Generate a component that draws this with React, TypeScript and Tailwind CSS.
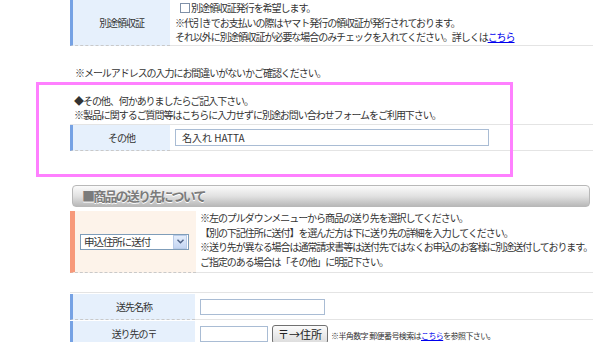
const Label = ({ w, children, color, bg, h }: { w: string; children?: React.ReactNode; color: string; bg: string; h: string }) => (
  <div className={`${w} ${h} ${bg} ${color} shrink-0 flex items-center justify-center border-l-[3px] border-b border-b-[#c9c9c9] [border-bottom-style:dashed]`}>
    {children}
  </div>
);

export default function App() {
  return (
    <div className="relative w-[600px] h-[342px] overflow-hidden bg-white font-['Noto_Sans_CJK_JP','Noto_Sans',sans-serif] text-[10px] tracking-[-1.05px] text-[#333]">
      <div className="ml-[70px] w-[523px]">
        {/* 別途領収証 */}
        <div className="flex h-[46px]">
          <Label w="w-[100px]" h="h-[46px]" bg="bg-[#e6f0fc]" color="border-l-[#76a2e4]">別途領収証</Label>
          <div className="flex-1 pl-[5px] border-b border-[#e4e4e4] leading-[14.5px]">
            <div className="flex items-center pt-[1px]">
              <span className="ml-[5px] mr-[1px] w-[10px] h-[10px] border border-[#7f90a8] bg-white"></span>
              別途領収証発行を希望します。
            </div>
            <div>※代引きでお支払いの際はヤマト発行の領収証が発行されております。</div>
            <div>
              それ以外に別途領収証が必要な場合のみチェックを入れてください。詳しくは
              <a className="text-[#0000ee] underline">こちら</a>
            </div>
          </div>
        </div>

        <div className="mt-[20px] pl-[5px] leading-[14px]">※メールアドレスの入力にお間違いがないかご確認ください。</div>

        {/* その他 */}
        <div className="mt-[14px] pl-[4px] leading-[14px]">
          <div>◆その他、何かありましたらご記入下さい。</div>
          <div>※製品に関するご質問等はこちらに入力せずに別途お問い合わせフォームをご利用下さい。</div>
        </div>
        <div className="mt-[2px] flex border-t border-[#e4e4e4]">
          <Label w="w-[100px]" h="h-[26px]" bg="bg-[#e6f0fc]" color="border-l-[#76a2e4]">その他</Label>
          <div className="flex-1 h-[26px] pl-[5px] border-b border-[#e4e4e4] flex items-center">
            <div className="w-[314px] h-[17px] border border-[#a9bcd4] bg-white pl-[6px] flex items-center tracking-[0px]">名入れ HATTA</div>
          </div>
        </div>

        {/* 見出し */}
        <div className="mt-[34px] ml-[2px] w-[518px] h-[22px] rounded-[4px] border border-[#b8b8b8] bg-gradient-to-b from-[#fbfbfb] via-[#e2e2e2] to-[#b9b9b9] flex items-center pl-[9px]">
          <span className="text-[13px] font-bold tracking-[-1.8px] text-[#7b7b7b] [text-shadow:0_1px_0_#fff]">■商品の送り先について</span>
        </div>

        {/* 送り先選択 */}
        <div className="mt-[4px] flex h-[62px]">
          <div className="w-[126px] shrink-0 bg-[#fdf3ea] border-l-[5px] border-l-[#f7997a] border-b border-b-[#c9c9c9] [border-bottom-style:dashed] flex items-center pl-[5px]">
            <div className="w-[109px] h-[16px] border border-[#7f9db9] bg-white flex items-center justify-between">
              <span className="pl-[3px] text-[10.5px]">申込住所に送付</span>
              <span className="w-[14px] h-[14px] mr-[1px] bg-gradient-to-b from-[#e4edfb] to-[#c4d5f2] border border-[#b9cbe8] flex items-center justify-center">
                <svg width="7" height="5" viewBox="0 0 7 5"><path d="M0.5 0.8 L3.5 3.8 L6.5 0.8" stroke="#4d6185" strokeWidth="1.4" fill="none" /></svg>
              </span>
            </div>
          </div>
          <div className="flex-1 pl-[4px] leading-[14.5px] border-b border-[#e4e4e4]">
            <div>※左のプルダウンメニューから商品の送り先を選択してください。</div>
            <div>【別の下記住所に送付】を選んだ方は下に送り先の詳細を入力してください。</div>
            <div>※送り先が異なる場合は通常請求書等は送付先ではなくお申込のお客様に別途送付しております。</div>
            <div>ご指定のある場合は「その他」に明記下さい。</div>
          </div>
        </div>

        {/* 送先 */}
        <div className="mt-[19px] border-t border-[#e4e4e4] pt-[1px]">
          <div className="flex">
            <Label w="w-[125px]" h="h-[26px]" bg="bg-[#e6f0fc]" color="border-l-[#76a2e4]">送先名称</Label>
            <div className="flex-1 pl-[5px] flex items-center border-b border-[#e4e4e4]">
              <div className="w-[125px] h-[16px] border border-[#a9bcd4] bg-white"></div>
            </div>
          </div>
          <div className="flex mt-[1px]">
            <Label w="w-[125px]" h="h-[26px]" bg="bg-[#e6f0fc]" color="border-l-[#76a2e4]">送り先の〒</Label>
            <div className="flex-1 pl-[5px] flex items-center">
              <div className="w-[68px] h-[16px] border border-[#a9bcd4] bg-white"></div>
              <div className="ml-[4px] w-[56px] h-[19px] rounded-[3px] border border-[#707070] bg-gradient-to-b from-[#fbfbfb] to-[#dcdcdc] flex items-center justify-center text-[11px] tracking-[0px] text-[#222]">〒→住所</div>
              <span className="ml-[3px] text-[8px] tracking-[-0.6px] mt-[3px]">※半角数字 郵便番号検索は<a className="text-[#0000ee] underline">こちら</a>を参照下さい。</span>
            </div>
          </div>
        </div>
      </div>

      {/* 注記枠 */}
      <div className="absolute left-[36px] top-[82px] w-[477px] h-[95px] border-[3px] border-[#ff80ff]"></div>
    </div>
  );
}
